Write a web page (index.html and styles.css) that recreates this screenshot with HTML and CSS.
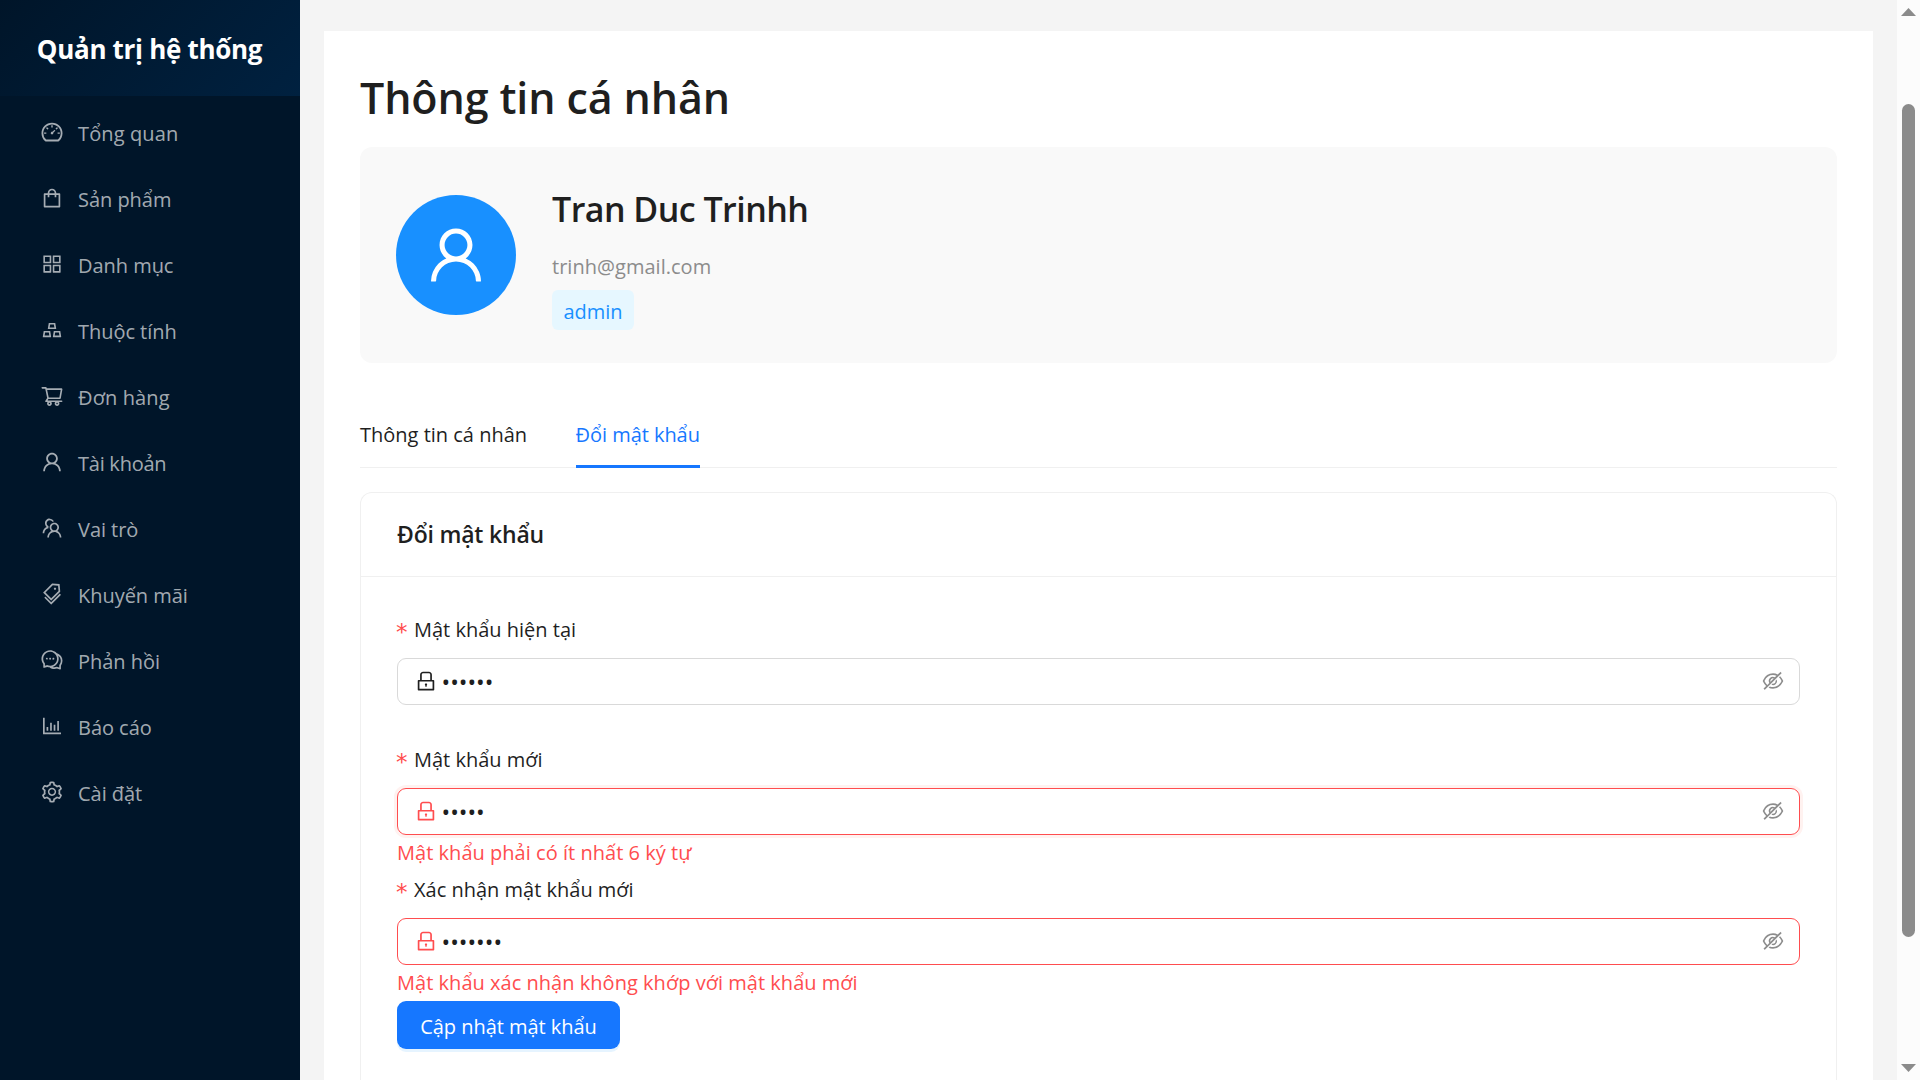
FILE: index.html
```html
<!DOCTYPE html>
<html lang="vi">
<head>
<meta charset="utf-8">
<title>Thông tin cá nhân</title>
<link rel="stylesheet" href="styles.css">
</head>
<body>
<svg class="sprite" aria-hidden="true">
  <symbol id="i-dashboard" viewBox="0 0 1024 1024"><path d="M924.8 385.6a446.7 446.7 0 00-96-142.4 446.7 446.7 0 00-142.4-96C631.1 123.8 572.5 112 512 112s-119.1 11.8-174.4 35.2a446.7 446.7 0 00-142.4 96 446.7 446.7 0 00-96 142.4C75.8 440.9 64 499.5 64 560c0 132.7 58.3 257.7 159.9 343.1l1.7 1.4c5.8 4.8 13.1 7.5 20.6 7.5h531.7c7.5 0 14.8-2.7 20.6-7.5l1.7-1.4C901.7 817.7 960 692.7 960 560c0-60.5-11.9-119.1-35.2-174.4zM761.4 836H262.6A371.12 371.12 0 01140 560c0-99.4 38.7-192.8 109-263 70.3-70.3 163.7-109 263-109 99.4 0 192.8 38.7 263 109 70.3 70.3 109 163.7 109 263 0 105.6-44.5 205.5-122.6 276zM623.5 421.5a8.03 8.03 0 00-11.3 0L527.7 506c-18.7-5-39.4-.2-54.1 14.5a55.95 55.95 0 000 79.2 55.95 55.95 0 0079.2 0 55.87 55.87 0 0014.5-54.1l84.5-84.5c3.1-3.1 3.1-8.2 0-11.3l-28.3-28.3zM490 320h44c4.4 0 8-3.6 8-8v-80c0-4.4-3.6-8-8-8h-44c-4.4 0-8 3.6-8 8v80c0 4.4 3.6 8 8 8zm260 218v44c0 4.4 3.6 8 8 8h80c4.4 0 8-3.6 8-8v-44c0-4.4-3.6-8-8-8h-80c-4.4 0-8 3.6-8 8zm12.7-197.2l-31.1-31.1a8.03 8.03 0 00-11.3 0l-56.6 56.6a8.03 8.03 0 000 11.3l31.1 31.1c3.1 3.1 8.2 3.1 11.3 0l56.6-56.6c3.1-3.1 3.1-8.2 0-11.3zm-458.6-31.1a8.03 8.03 0 00-11.3 0l-31.1 31.1a8.03 8.03 0 000 11.3l56.6 56.6c3.1 3.1 8.2 3.1 11.3 0l31.1-31.1c3.1-3.1 3.1-8.2 0-11.3l-56.6-56.6zM262 530h-80c-4.4 0-8 3.6-8 8v44c0 4.4 3.6 8 8 8h80c4.4 0 8-3.6 8-8v-44c0-4.4-3.6-8-8-8z"/></symbol>
  <symbol id="i-shopping" viewBox="0 0 1024 1024"><path d="M832 312H696v-16c0-101.6-82.4-184-184-184s-184 82.4-184 184v16H192c-17.7 0-32 14.3-32 32v536c0 17.7 14.3 32 32 32h640c17.7 0 32-14.3 32-32V344c0-17.7-14.3-32-32-32zm-432-16c0-61.9 50.1-112 112-112s112 50.1 112 112v16H400v-16zm392 544H232V384h96v88c0 4.4 3.6 8 8 8h56c4.4 0 8-3.6 8-8v-88h224v88c0 4.4 3.6 8 8 8h56c4.4 0 8-3.6 8-8v-88h96v456z"/></symbol>
  <symbol id="i-appstore" viewBox="0 0 1024 1024"><path d="M464 144H160c-8.8 0-16 7.2-16 16v304c0 8.8 7.2 16 16 16h304c8.8 0 16-7.2 16-16V160c0-8.8-7.2-16-16-16zm-52 268H212V212h200v200zm452-268H560c-8.8 0-16 7.2-16 16v304c0 8.8 7.2 16 16 16h304c8.8 0 16-7.2 16-16V160c0-8.8-7.2-16-16-16zm-52 268H612V212h200v200zM464 544H160c-8.8 0-16 7.2-16 16v304c0 8.8 7.2 16 16 16h304c8.8 0 16-7.2 16-16V560c0-8.8-7.2-16-16-16zm-52 268H212V612h200v200zm452-268H560c-8.8 0-16 7.2-16 16v304c0 8.8 7.2 16 16 16h304c8.8 0 16-7.2 16-16V560c0-8.8-7.2-16-16-16zm-52 268H612V612h200v200z"/></symbol>
  <symbol id="i-gold" viewBox="0 0 1024 1024"><path d="M342 472h342c.4 0 .9 0 1.3-.1 4.4-.7 7.3-4.8 6.6-9.2l-40.2-248c-.6-3.9-4-6.7-7.9-6.7H382.2c-3.9 0-7.3 2.8-7.9 6.7l-40.2 248c-.1.4-.1.9-.1 1.3 0 4.4 3.6 8 8 8zm91.2-196h159.5l20.7 128h-201l20.8-128zm2.5 282.7c-.6-3.9-4-6.7-7.9-6.7H166.2c-3.9 0-7.3 2.8-7.9 6.7l-40.2 248c-.1.4-.1.9-.1 1.3 0 4.4 3.6 8 8 8h342c.4 0 .9 0 1.3-.1 4.4-.7 7.3-4.8 6.6-9.2l-40.2-248zM196.5 748l20.7-128h159.5l20.7 128H196.5zm709.4 58.7l-40.2-248c-.6-3.9-4-6.7-7.9-6.7H596.2c-3.9 0-7.3 2.8-7.9 6.7l-40.2 248c-.1.4-.1.9-.1 1.3 0 4.4 3.6 8 8 8h342c.4 0 .9 0 1.3-.1 4.3-.7 7.3-4.8 6.6-9.2zM626.5 748l20.7-128h159.5l20.7 128H626.5z"/></symbol>
  <symbol id="i-cart" viewBox="0 0 1024 1024"><path d="M922.9 701.9H327.4l29.9-60.9 496.8-.9c16.8 0 31.2-12 34.2-28.6l68.8-385.1c1.8-10.1-.9-20.5-7.5-28.4a34.99 34.99 0 00-26.6-12.5l-632-2.1-5.4-25.4c-3.4-16.2-18-28-34.6-28H96.5a35.3 35.3 0 100 70.6h125.9L246 312.8l58.1 281.3-74.8 122.1a34.96 34.96 0 00-3 36.8c6 11.9 18.1 19.4 31.5 19.4h62.8a102.43 102.43 0 00-20.6 61.7c0 56.6 46 102.6 102.6 102.6s102.6-46 102.6-102.6c0-22.3-7.4-44-20.6-61.7h161.1a102.43 102.43 0 00-20.6 61.7c0 56.6 46 102.6 102.6 102.6s102.6-46 102.6-102.6c0-22.3-7.4-44-20.6-61.7H923c19.4 0 35.3-15.8 35.3-35.3a35.42 35.42 0 00-35.4-35.2zM305.7 253l575.8 1.9-56.4 315.8-452.3.8L305.7 253zm96.9 612.7c-17.4 0-31.6-14.2-31.6-31.6 0-17.4 14.2-31.6 31.6-31.6s31.6 14.2 31.6 31.6a31.6 31.6 0 01-31.6 31.6zm325.1 0c-17.4 0-31.6-14.2-31.6-31.6 0-17.4 14.2-31.6 31.6-31.6s31.6 14.2 31.6 31.6a31.6 31.6 0 01-31.6 31.6z"/></symbol>
  <symbol id="i-user" viewBox="0 0 1024 1024"><path d="M858.5 763.6a374 374 0 00-80.6-119.5 375.63 375.63 0 00-119.5-80.6c-.4-.2-.8-.3-1.2-.5C719.5 518 760 444.7 760 362c0-137-111-248-248-248S264 225 264 362c0 82.7 40.5 156 102.8 201.1-.4.2-.8.3-1.2.5-44.8 18.9-85 46-119.5 80.6a375.63 375.63 0 00-80.6 119.5A371.7 371.7 0 00136 901.8a8 8 0 008 8.2h60c4.4 0 7.9-3.5 8-7.8 2-77.2 33-149.5 87.8-204.3 56.7-56.7 132-87.9 212.2-87.9s155.5 31.2 212.2 87.9C779 752.7 810 825 812 902.2c.1 4.4 3.6 7.8 8 7.8h60a8 8 0 008-8.2c-1-47.8-10.9-94.3-29.5-138.2zM512 534c-45.9 0-89.1-17.9-121.6-50.4S340 407.9 340 362c0-45.9 17.9-89.1 50.4-121.6S466.1 190 512 190s89.1 17.9 121.6 50.4S684 316.1 684 362c0 45.9-17.9 89.1-50.4 121.6S557.9 534 512 534z"/></symbol>
  <symbol id="i-team" viewBox="0 0 1024 1024"><path d="M824.2 699.9a301.55 301.55 0 00-86.4-60.4C783.1 602.8 812 546.8 812 484c0-110.8-92.4-201.7-203.2-200-109.1 1.7-197 90.6-197 200 0 62.8 29 118.8 74.2 155.5a300.95 300.95 0 00-86.4 60.4C345 754.6 314 826.8 312 903.8a8 8 0 008 8.2h56c4.3 0 7.9-3.4 8-7.7 1.9-58 25.4-112.3 66.7-153.5A226.62 226.62 0 01612 684c60.9 0 118.2 23.7 161.3 66.8C814.6 792 838 846.3 840 904.3c.1 4.3 3.7 7.7 8 7.7h56a8 8 0 008-8.2c-2-77-33-149.2-87.8-203.9zM612 612c-34.2 0-66.4-13.3-90.5-37.5a126.86 126.86 0 01-37.5-91.8c.3-32.8 13.4-64.5 36.3-88 24-24.6 56.1-38.3 90.4-38.7 33.9-.3 66.8 12.9 91 36.6 24.8 24.3 38.4 56.8 38.4 91.4 0 34.2-13.3 66.3-37.5 90.5A127.3 127.3 0 01612 612zM361.5 510.4c-.9-8.7-1.4-17.5-1.4-26.4 0-15.9 1.5-31.4 4.3-46.5.7-3.6-1.2-7.3-4.5-8.8-13.6-6.1-26.1-14.5-36.9-25.1a127.54 127.54 0 01-38.7-95.4c.9-32.1 13.8-62.6 36.3-85.6 24.7-25.3 57.9-39.1 93.2-38.7 31.9.3 62.7 12.6 86 34.4 7.9 7.4 14.7 15.6 20.4 24.4 2 3.1 5.9 4.4 9.3 3.2 17.6-6.1 36.2-10.4 55.3-12.4 5.6-.6 8.8-6.6 6.3-11.6-32.5-64.3-98.9-108.7-175.7-109.9-110.9-1.7-203.3 89.2-203.3 199.9 0 62.8 28.9 118.8 74.2 155.5-31.8 14.7-61.1 35-86.5 60.4-54.8 54.7-85.8 126.9-87.8 204a8 8 0 008 8.2h56.1c4.3 0 7.9-3.4 8-7.7 1.9-58 25.4-112.3 66.7-153.5 29.4-29.4 65.4-49.8 104.7-59.7 3.9-1 6.5-4.7 6-8.7z"/></symbol>
  <symbol id="i-tags" viewBox="0 0 1024 1024"><path d="M483.2 790.3L861.4 412c1.7-1.7 2.5-4 2.3-6.3l-25.5-301.4c-.7-7.8-6.8-13.9-14.6-14.6L522.2 64.3c-2.3-.2-4.7.6-6.3 2.3L137.7 444.8a8.03 8.03 0 000 11.3l334.2 334.2c3.1 3.2 8.2 3.2 11.3 0zm62.6-651.7l224.6 19 19 224.6L477.5 694 233.9 450.5l311.9-311.9zm60.16 186.23a48 48 0 1067.88-67.89 48 48 0 10-67.88 67.89zM889.7 539.8l-39.6-39.5a8.03 8.03 0 00-11.3 0l-362 361.3-237.6-237a8.03 8.03 0 00-11.3 0l-39.6 39.5a8.03 8.03 0 000 11.3l243.2 242.8 39.6 39.5c3.1 3.1 8.2 3.1 11.3 0l407.3-406.6c3.1-3.1 3.1-8.2 0-11.3z"/></symbol>
  <symbol id="i-comment" viewBox="0 0 1024 1024"><path d="M573 421c-23.1 0-41 17.9-41 40s17.9 40 41 40c21.1 0 39-17.9 39-40s-17.9-40-39-40zm-280 0c-23.1 0-41 17.9-41 40s17.9 40 41 40c21.1 0 39-17.9 39-40s-17.9-40-39-40z"/><path d="M894 345a343.92 343.92 0 00-189-130v.1c-17.1-19-36.4-36.5-58-52.1-163.7-119-393.5-82.7-513 81-96.3 133-92.2 311.9 6 439l.8 132.6c0 3.2.5 6.4 1.5 9.4a31.95 31.95 0 0040.1 20.9L309 806c33.5 11.9 68.1 18.7 102.5 20.6l-.5.4c89.1 64.9 205.9 84.4 313 49l127.1 41.4c3.2 1 6.5 1.6 9.9 1.6 17.7 0 32-14.3 32-32V753c88.1-119.6 90.4-284.9 1-408zM323 735l-12-5-99 31-1-104-8-9c-84.6-103.2-90.2-251.9-11-361 96.4-132.2 281.2-161.4 413-66 132.2 96.1 161.5 280.6 66 412-80.1 109.9-223.5 150.5-348 102zm505-17l-8 10 1 104-98-33-12 5c-56 20.8-115.7 22.5-171 7l-.2-.1A367.31 367.31 0 00729 676c76.4-105.3 88.8-237.6 44.4-350.4l.6.4c23 16.5 44.1 37.1 62 62 72.6 99.6 68.5 235.2-8 330z"/><path d="M433 421c-23.1 0-41 17.9-41 40s17.9 40 41 40c21.1 0 39-17.9 39-40s-17.9-40-39-40z"/></symbol>
  <symbol id="i-chart" viewBox="0 0 1024 1024"><path d="M888 792H200V168c0-4.4-3.6-8-8-8h-56c-4.4 0-8 3.6-8 8v688c0 4.4 3.6 8 8 8h752c4.4 0 8-3.6 8-8v-56c0-4.4-3.6-8-8-8zm-600-80h56c4.4 0 8-3.6 8-8V560c0-4.4-3.6-8-8-8h-56c-4.4 0-8 3.6-8 8v144c0 4.4 3.6 8 8 8zm152 0h56c4.4 0 8-3.6 8-8V384c0-4.4-3.6-8-8-8h-56c-4.4 0-8 3.6-8 8v320c0 4.4 3.6 8 8 8zm152 0h56c4.4 0 8-3.6 8-8V462c0-4.4-3.6-8-8-8h-56c-4.4 0-8 3.6-8 8v242c0 4.4 3.6 8 8 8zm152 0h56c4.4 0 8-3.6 8-8V304c0-4.4-3.6-8-8-8h-56c-4.4 0-8 3.6-8 8v400c0 4.4 3.6 8 8 8z"/></symbol>
  <symbol id="i-setting" viewBox="0 0 1024 1024"><path d="M924.8 625.7l-65.5-56c3.1-19 4.7-38.4 4.7-57.8s-1.6-38.8-4.7-57.8l65.5-56a32.03 32.03 0 009.3-35.2l-.9-2.6a443.74 443.74 0 00-79.7-137.9l-1.8-2.1a32.12 32.12 0 00-35.1-9.5l-81.3 28.9c-30-24.6-63.5-44-99.7-57.6l-15.7-85a32.05 32.05 0 00-25.8-25.7l-2.7-.5c-52.1-9.4-106.9-9.4-159 0l-2.7.5a32.05 32.05 0 00-25.8 25.7l-15.8 85.4a351.86 351.86 0 00-99 57.4l-81.9-29.1a32 32 0 00-35.1 9.5l-1.8 2.1a446.02 446.02 0 00-79.7 137.9l-.9 2.6c-4.5 12.5-.8 26.5 9.3 35.2l66.3 56.6c-3.1 18.8-4.6 38-4.6 57.1 0 19.2 1.5 38.4 4.6 57.1L99 625.5a32.03 32.03 0 00-9.3 35.2l.9 2.6c18.1 50.4 44.9 96.9 79.7 137.9l1.8 2.1a32.12 32.12 0 0035.1 9.5l81.9-29.1c29.8 24.5 63.1 43.9 99 57.4l15.8 85.4a32.05 32.05 0 0025.8 25.7l2.7.5a449.4 449.4 0 00159 0l2.7-.5a32.05 32.05 0 0025.8-25.7l15.7-85a350 350 0 0099.7-57.6l81.3 28.9a32 32 0 0035.1-9.5l1.8-2.1c34.8-41.1 61.6-87.5 79.7-137.9l.9-2.6c4.5-12.3.8-26.3-9.3-35zM788.3 465.9c2.5 15.1 3.8 30.6 3.8 46.1s-1.3 31-3.8 46.1l-6.6 40.1 74.7 63.9a370.03 370.03 0 01-42.6 73.6L721 702.8l-31.4 25.8c-23.9 19.6-50.5 35-79.3 45.8l-38.1 14.3-17.9 97a377.5 377.5 0 01-85 0l-17.9-97.2-37.8-14.5c-28.5-10.8-55-26.2-78.7-45.7l-31.4-25.9-93.4 33.2c-17-22.9-31.2-47.6-42.6-73.6l75.5-64.5-6.5-40c-2.4-14.9-3.7-30.3-3.7-45.5 0-15.3 1.2-30.6 3.7-45.5l6.5-40-75.5-64.5c11.3-26.1 25.6-50.7 42.6-73.6l93.4 33.2 31.4-25.9c23.7-19.5 50.2-34.9 78.7-45.7l37.9-14.3 17.9-97.2c28.1-3.2 56.8-3.2 85 0l17.9 97 38.1 14.3c28.7 10.8 55.4 26.2 79.3 45.8l31.4 25.8 92.8-32.9c17 22.9 31.2 47.6 42.6 73.6L781.8 426l6.5 39.9zM512 326c-97.2 0-176 78.8-176 176s78.8 176 176 176 176-78.8 176-176-78.8-176-176-176zm79.2 255.2A111.6 111.6 0 01512 614c-29.9 0-58-11.7-79.2-32.8A111.6 111.6 0 01400 502c0-29.9 11.7-58 32.8-79.2C454 401.6 482.1 390 512 390c29.9 0 58 11.6 79.2 32.8A111.6 111.6 0 01624 502c0 29.9-11.7 58-32.8 79.2z"/></symbol>
  <symbol id="i-lock" viewBox="0 0 1024 1024"><path d="M832 464h-68V240c0-70.7-57.3-128-128-128H388c-70.7 0-128 57.3-128 128v224h-68c-17.7 0-32 14.3-32 32v384c0 17.7 14.3 32 32 32h640c17.7 0 32-14.3 32-32V496c0-17.7-14.3-32-32-32zM332 240c0-30.9 25.1-56 56-56h248c30.9 0 56 25.1 56 56v224H332V240zm460 600H232V536h560v304zM484 701v53c0 4.4 3.6 8 8 8h40c4.4 0 8-3.6 8-8v-53a48.01 48.01 0 10-56 0z"/></symbol>
  <symbol id="i-eye" viewBox="0 0 1024 1024"><path d="M942.2 486.2Q889.47 375.11 816.7 305l-50.88 50.88C807.31 395.53 843.45 447.4 874.7 512 791.5 684.2 673.4 766 512 766q-72.67 0-133.87-22.38L323 798.75Q408 838 512 838q288.3 0 430.2-300.3a60.29 60.29 0 000-51.5zm-63.57-320.64L836 122.88a8 8 0 00-11.32 0L715.31 232.2Q624.86 186 512 186q-288.3 0-430.2 300.3a60.3 60.3 0 000 51.5q56.69 119.4 136.5 191.41L112.48 835a8 8 0 000 11.31L155.17 889a8 8 0 0011.31 0l712.15-712.12a8 8 0 000-11.32zM149.3 512C232.6 339.8 350.7 258 512 258c54.54 0 104.13 9.36 149.12 28.39l-70.3 70.3a176 176 0 00-238.13 238.13l-83.42 83.42C223.1 637.49 183.3 582.28 149.3 512zm246.7 0a112.11 112.11 0 01146.2-106.69L401.31 546.2A112 112 0 01396 512z"/><path d="M508 624c-3.46 0-6.87-.16-10.25-.47l-52.82 52.82a176.09 176.09 0 00227.42-227.42l-52.82 52.82c.31 3.38.47 6.79.47 10.25a111.94 111.94 0 01-112 112z"/></symbol>
</svg>
<div class="layout">
  <aside class="sider">
    <div class="brand">Quản trị hệ thống</div>
    <nav class="menu">
      <a class="menu-item"><svg class="icon"><use href="#i-dashboard"/></svg><span class="wide">Tổng quan</span></a>
      <a class="menu-item"><svg class="icon"><use href="#i-shopping"/></svg><span>Sản phẩm</span></a>
      <a class="menu-item"><svg class="icon"><use href="#i-appstore"/></svg><span>Danh mục</span></a>
      <a class="menu-item"><svg class="icon"><use href="#i-gold"/></svg><span>Thuộc tính</span></a>
      <a class="menu-item"><svg class="icon"><use href="#i-cart"/></svg><span class="wide">Đơn hàng</span></a>
      <a class="menu-item"><svg class="icon"><use href="#i-user"/></svg><span class="tight">Tài khoản</span></a>
      <a class="menu-item"><svg class="icon"><use href="#i-team"/></svg><span>Vai trò</span></a>
      <a class="menu-item"><svg class="icon"><use href="#i-tags"/></svg><span>Khuyến mãi</span></a>
      <a class="menu-item"><svg class="icon"><use href="#i-comment"/></svg><span>Phản hồi</span></a>
      <a class="menu-item"><svg class="icon"><use href="#i-chart"/></svg><span>Báo cáo</span></a>
      <a class="menu-item"><svg class="icon"><use href="#i-setting"/></svg><span>Cài đặt</span></a>
    </nav>
  </aside>
  <main class="content">
    <section class="panel">
      <h1 class="page-title">Thông tin cá nhân</h1>
      <div class="profile">
        <div class="avatar"><svg class="avatar-icon"><use href="#i-user"/></svg></div>
        <div class="info">
          <h2 class="name">Tran Duc Trinhh</h2>
          <div class="email">trinh@gmail.com</div>
          <span class="role">admin</span>
        </div>
      </div>
      <div class="tabs">
        <div class="tab">Thông tin cá nhân</div>
        <div class="tab tab-active">Đổi mật khẩu</div>
      </div>
      <div class="card">
        <div class="card-head">Đổi mật khẩu</div>
        <form class="card-body">
          <div class="field">
            <label class="label"><span class="star">*</span><span>Mật khẩu hiện tại</span></label>
            <div class="input"><svg class="icon"><use href="#i-lock"/></svg><span class="dots">••••••</span><svg class="icon eye"><use href="#i-eye"/></svg></div>
          </div>
          <div class="field">
            <label class="label"><span class="star">*</span><span>Mật khẩu mới</span></label>
            <div class="input invalid focused"><svg class="icon"><use href="#i-lock"/></svg><span class="dots">•••••</span><svg class="icon eye"><use href="#i-eye"/></svg></div>
            <div class="error">Mật khẩu phải có ít nhất 6 ký tự</div>
          </div>
          <div class="field">
            <label class="label"><span class="star">*</span><span>Xác nhận mật khẩu mới</span></label>
            <div class="input invalid"><svg class="icon"><use href="#i-lock"/></svg><span class="dots">•••••••</span><svg class="icon eye"><use href="#i-eye"/></svg></div>
            <div class="error">Mật khẩu xác nhận không khớp với mật khẩu mới</div>
          </div>
          <button type="button" class="submit">Cập nhật mật khẩu</button>
        </form>
      </div>
    </section>
  </main>
  <div class="scrollbar"><i class="arrow up"></i><i class="thumb"></i><i class="arrow down"></i></div>
</div>
</body>
</html>
```
FILE: styles.css
```css
* { box-sizing: border-box; }

body {
  margin: 0;
  height: 1080px;
  overflow: hidden;
  font-family: "Open Sans", "Noto Sans", sans-serif;
  font-size: 20px;
  color: #1f1f1f;
  background: #f4f4f4;
}

h1, h2 { margin: 0; font-weight: 600; }

.sprite { display: none; }

.icon { width: 24px; height: 24px; flex: none; fill: currentColor; }

.wide { letter-spacing: .12px; }
.tight { letter-spacing: -.25px; }

.layout { display: flex; height: 1080px; }

.sider { width: 300px; flex: none; background: #001529; }

.brand {
  height: 96px;
  display: flex;
  align-items: center;
  justify-content: center;
  padding: 2px 1px 0 0;
  font-size: 26px;
  font-weight: 700;
  letter-spacing: -.31px;
  color: #fff;
  white-space: nowrap;
  background: linear-gradient(135deg, #001529, #002140);
}

.menu { display: flex; flex-direction: column; gap: 6px; padding-top: 7px; }

.menu-item {
  height: 60px;
  display: flex;
  align-items: center;
  gap: 14px;
  padding-left: 40px;
  letter-spacing: -.04px;
  color: rgba(255, 255, 255, .65);
}

.menu-item .icon { margin-top: -2px; }

.content { flex: 1; min-width: 0; display: flex; flex-direction: column; padding: 31px 24px 0; }

.panel { flex: 1; display: flex; flex-direction: column; padding: 36px 36px 0; background: #fff; }

.page-title {
  height: 60px;
  margin-bottom: 20px;
  padding-top: 1px;
  font-size: 43px;
  line-height: 60px;
  letter-spacing: -.12px;
}

.profile {
  height: 216px;
  display: flex;
  align-items: center;
  gap: 36px;
  padding: 0 36px;
  border-radius: 12px;
  background: #f9f9f9;
}

.avatar {
  width: 120px;
  height: 120px;
  display: flex;
  align-items: center;
  justify-content: center;
  border-radius: 50%;
  background: #1890ff;
}

.avatar-icon { width: 68px; height: 68px; fill: #fff; }

.info { height: 141px; }

.name {
  margin-bottom: 17px;
  font-size: 34px;
  line-height: 48px;
  letter-spacing: -.54px;
}

.email { line-height: 33px; margin-bottom: 7px; letter-spacing: .03px; color: #8c8c8c; }

.role {
  display: block;
  width: 82px;
  height: 40px;
  padding-top: 1px;
  line-height: 42px;
  text-align: center;
  border-radius: 6px;
  color: #1890ff;
  background: #e6f7ff;
}

.tabs { display: flex; gap: 48.5px; margin-top: 38px; border-bottom: 1px solid #f0f0f0; }

.tab { height: 67px; margin-bottom: -1px; line-height: 67px; }

.tab-active { color: #1677ff; letter-spacing: -.05px; box-shadow: inset 0 -3px #1677ff; }

.card {
  flex: 1;
  margin-top: 24px;
  border: 1px solid #f0f0f0;
  border-bottom: 0;
  border-radius: 12px 12px 0 0;
}

.card-head {
  height: 84px;
  padding: 0 36px;
  border-bottom: 1px solid #f0f0f0;
  font-size: 23px;
  font-weight: 600;
  line-height: 82px;
  letter-spacing: -.2px;
}

.card-body { padding: 37px 36px 0; }

.field { height: 130px; }
.field:last-of-type { height: 127px; }

.label { display: flex; gap: 6px; height: 30px; margin-bottom: 14px; padding-top: 1px; line-height: 30px; }

.star {
  width: 11px;
  margin-left: -1px;
  margin-right: 1px;
  font-family: "DejaVu Sans", sans-serif;
  font-size: 23px;
  line-height: 35px;
  color: #ff4d4f;
}

.input {
  height: 47px;
  display: flex;
  align-items: center;
  padding: 0 14px 1px 16px;
  border: 1px solid #d9d9d9;
  border-radius: 9px;
}

.invalid { border-color: #ff4d4f; color: #ff4d4f; }
.focused { box-shadow: 0 0 0 3px rgba(255, 38, 5, .06); }

.dots { flex: 1; margin-left: 3.5px; padding-top: 3px; font-size: 23px; line-height: 41px; color: #1f1f1f; }

.eye { color: rgba(0, 0, 0, .45); }

.error { height: 34px; line-height: 36px; letter-spacing: .03px; color: #ff4d4f; }

.submit {
  display: block;
  width: 223px;
  height: 48px;
  padding: 2px 0 0;
  border: 0;
  border-radius: 9px;
  font: inherit;
  letter-spacing: -.03px;
  color: #fff;
  background: #1677ff;
  box-shadow: 0 3px 0 rgba(5, 145, 255, .1);
}

.scrollbar {
  width: 23px;
  display: flex;
  flex-direction: column;
  align-items: center;
  padding: 8px 0;
  background: #fcfcfc;
}

.arrow { width: 15px; height: 8px; background: #8b8b8b; }
.up { clip-path: polygon(50% 0, 100% 100%, 0 100%); }
.down { margin-top: auto; clip-path: polygon(0 0, 100% 0, 50% 100%); }

.thumb { width: 13px; height: 833px; margin-top: 88px; border-radius: 7px; background: #8b8b8b; }
```
